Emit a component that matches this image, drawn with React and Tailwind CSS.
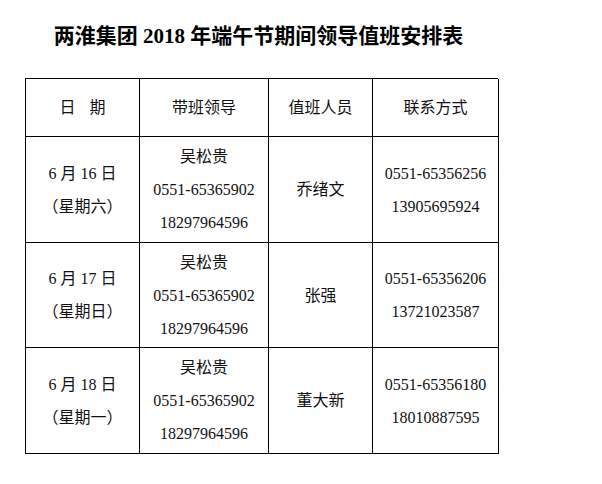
const FONT = { fontFamily: '"Liberation Serif", "Noto Sans CJK SC", serif' };

const ROWS = [
  { date: '6 月 16 日', week: '（星期六）', leader: ['吴松贵', '0551-65365902', '18297964596'], duty: '乔绪文', phone: ['0551-65356256', '13905695924'] },
  { date: '6 月 17 日', week: '（星期日）', leader: ['吴松贵', '0551-65365902', '18297964596'], duty: '张强', phone: ['0551-65356206', '13721023587'] },
  { date: '6 月 18 日', week: '（星期一）', leader: ['吴松贵', '0551-65365902', '18297964596'], duty: '董大新', phone: ['0551-65356180', '18010887595'] },
];

function Cell({ children, className = '' }) {
  return (
    <div className={`border-r border-b border-black flex flex-col items-center justify-center text-center ${className}`}>
      {children}
    </div>
  );
}

export default function App() {
  return (
    <div className="w-[602px] h-[484px] bg-white text-[#111]" style={FONT}>
      <div className="ml-[25px] w-[473px] pt-[21px]">
        <h1 className="text-[21px] font-bold leading-[30px] text-center text-black pr-[6px]">
          两淮集团 2018 年端午节期间领导值班安排表
        </h1>

        <div className="mt-[27px] border-l border-t border-black grid grid-cols-[114px_129px_104px_126px] text-[16px] leading-[33px]">
          <Cell className="h-[58px]">
            <div className="flex gap-[14px]"><span>日</span><span>期</span></div>
          </Cell>
          <Cell className="h-[58px]">带班领导</Cell>
          <Cell className="h-[58px]">值班人员</Cell>
          <Cell className="h-[58px]">联系方式</Cell>

          {ROWS.map((r, i) => (
            <div key={i} className="contents">
              <Cell className={i === 1 ? 'h-[105px]' : 'h-[106px]'}>
                <div>{r.date}</div>
                <div>{r.week}</div>
              </Cell>
              <Cell>
                {r.leader.map((l) => (
                  <div key={l}>{l}</div>
                ))}
              </Cell>
              <Cell>{r.duty}</Cell>
              <Cell>
                {r.phone.map((p) => (
                  <div key={p}>{p}</div>
                ))}
              </Cell>
            </div>
          ))}
        </div>
      </div>
    </div>
  );
}
